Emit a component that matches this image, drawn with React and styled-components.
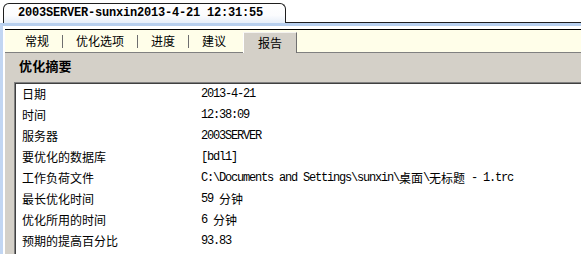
import React from 'react'
import styled, { createGlobalStyle } from 'styled-components'

const GlobalStyle = createGlobalStyle`
  html, body { margin: 0; padding: 0; background: #fff; overflow: hidden; }
  body { font-family: "Noto Sans CJK SC", "Liberation Sans", sans-serif; font-size: 12px; color: #000; }
`

const report = [
  { label: '日期', value: '2013-4-21' },
  { label: '时间', value: '12:38:09' },
  { label: '服务器', value: '2003SERVER' },
  { label: '要优化的数据库', value: '[bdl1]' },
  { label: '工作负荷文件', value: 'C:\\Documents and Settings\\sunxin\\桌面\\无标题 - 1.trc' },
  { label: '最长优化时间', value: '59 分钟' },
  { label: '优化所用的时间', value: '6 分钟' },
  { label: '预期的提高百分比', value: '93.83' },
]

const tabs = ['常规', '优化选项', '进度', '建议']

// split a value into latin / CJK runs so each gets its own font
function Mixed({ text }) {
  const parts = text.split(/([\u3000-\u9fff\uff00-\uffef]+)/).filter(Boolean)
  return parts.map((p, i) =>
    /[\u3000-\u9fff\uff00-\uffef]/.test(p) ? <Han key={i}>{p}</Han> : <Mono key={i}>{p}</Mono>
  )
}

export default function App() {
  return (
    <Page>
      <GlobalStyle />
      <TitleRow>
        <OuterTab>2003SERVER-sunxin2013-4-21 12:31:55</OuterTab>
        <Filler />
      </TitleRow>
      <Pane>
        <TabStrip>
          {tabs.map((t, i) => (
            <React.Fragment key={t}>
              <Tab>{t}</Tab>
              {i < tabs.length - 1 && <Sep />}
            </React.Fragment>
          ))}
          <ActiveTab>报告</ActiveTab>
        </TabStrip>
        <Content>
          <Heading>优化摘要</Heading>
          <ListBox>
            {report.map(r => (
              <Row key={r.label}>
                <Label>{r.label}</Label>
                <Value><Mixed text={r.value} /></Value>
              </Row>
            ))}
          </ListBox>
        </Content>
      </Pane>
    </Page>
  )
}

const Page = styled.div`
  width: 581px;
  height: 254px;
  display: flex;
  flex-direction: column;
  overflow: hidden;
`
const TitleRow = styled.div`
  display: flex;
  align-items: flex-end;
  height: 23px;
  padding-left: 3px;
  flex-shrink: 0;
`
const OuterTab = styled.div`
  width: 267px;
  height: 19px;
  padding-left: 14px;
  border: 1px solid #1e1e1e;
  border-bottom: none;
  border-radius: 6px 6px 0 0;
  background: linear-gradient(#ffffff 0%, #fbfcfe 60%, #e6eef9 100%);
  font-family: "Liberation Mono", monospace;
  font-weight: bold;
  font-size: 12px;
  letter-spacing: -0.2px;
  line-height: 19px;
  white-space: nowrap;
`
const Filler = styled.div`
  flex: 1;
  height: 100%;
  border-bottom: 1px solid #1e1e1e;
  box-sizing: border-box;
`
const Pane = styled.div`
  flex: 1;
  display: flex;
  flex-direction: column;
  border-top: 3px solid #b7cfee;
  border-left: 3px solid #c2d6f2;
  padding: 3px 0 0 2px;
  background: #fff;
  min-height: 0;
`
const TabStrip = styled.div`
  display: flex;
  align-items: center;
  height: 22px;
  padding-left: 7px;
  background: #fffee9;
  border-top: 1px solid #000;
  border-bottom: 1px solid #808080;
  flex-shrink: 0;
`
const Tab = styled.div`
  padding: 0 13px;
  font-size: 12px;
  line-height: 16px;
  white-space: nowrap;
`
const Sep = styled.div`
  width: 1px;
  height: 13px;
  background: #6e6e6e;
`
const ActiveTab = styled.div`
  align-self: flex-end;
  margin-left: 4px;
  margin-bottom: -1px;
  height: 20px;
  padding: 0 14px 0 14px;
  background: #d4d0c8;
  border-left: 1px solid #fff;
  border-top: 1px solid #f4f3ef;
  border-right: 1px solid #707070;
  font-size: 12px;
  line-height: 19px;
  white-space: nowrap;
`
const Content = styled.div`
  flex: 1;
  background: #d4d0c8;
  padding: 5px 0 0 9px;
  min-height: 0;
  display: flex;
  flex-direction: column;
`
const Heading = styled.div`
  margin-left: 5px;
  font-size: 13px;
  font-weight: bold;
  line-height: 16px;
  letter-spacing: 0.2px;
`
const ListBox = styled.div`
  margin-top: 8px;
  margin-right: -20px;
  flex: 1;
  background: #fff;
  border-top: 1px solid #808080;
  border-left: 1px solid #808080;
  box-shadow: inset 1px 1px 0 #404040;
`
const Row = styled.div`
  display: flex;
  align-items: center;
  height: 21px;
  padding-left: 7px;
`
const Label = styled.div`
  width: 179px;
  flex-shrink: 0;
  font-size: 12px;
  white-space: nowrap;
`
const Value = styled.div`
  white-space: pre;
  display: flex;
  align-items: center;
`
const Mono = styled.span`
  font-family: "Liberation Mono", monospace;
  font-size: 12px;
  letter-spacing: -1.2px;
  white-space: pre;
`
const Han = styled.span`
  font-family: "Noto Sans CJK SC", sans-serif;
  font-size: 12px;
`
